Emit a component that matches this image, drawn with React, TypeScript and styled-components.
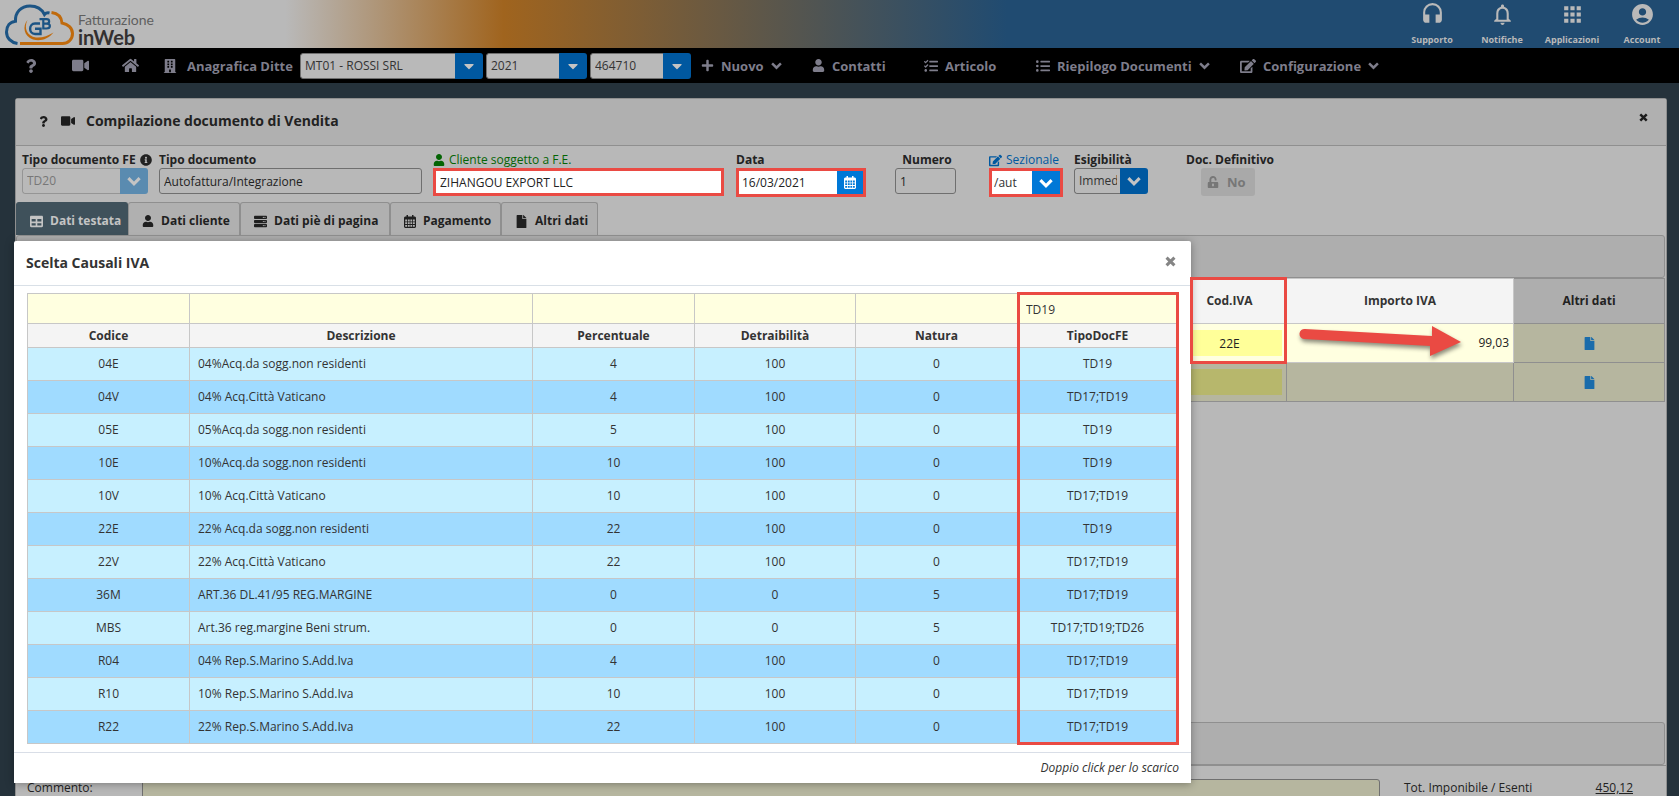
import React from "react";
import styled, { createGlobalStyle } from "styled-components";
import {
  FaBuilding,
  FaCaretDown,
  FaEdit,
  FaFile,
  FaHome,
  FaInfoCircle,
  FaListUl,
  FaPlus,
  FaQuestion,
  FaServer,
  FaTable,
  FaTasks,
  FaUnlockAlt,
  FaUser,
  FaVideo,
} from "react-icons/fa";
import { MdAccountCircle, MdApps, MdHeadset, MdNotificationsNone } from "react-icons/md";

const red = "#ea4a43";

const GlobalStyle = createGlobalStyle`
  * { box-sizing: border-box; }
  body {
    margin: 0;
    background: #25323b;
    color: #222;
    font-family: "Open Sans", "Noto Sans", sans-serif;
    font-size: 12px;
    line-height: 16px;
  }
  button, input, select, textarea { font: inherit; color: inherit; margin: 0; }
  svg { display: block; flex: none; }
`;

const Page = styled.div`
  position: relative;
  display: flex;
  flex-direction: column;
  height: 100vh;
  overflow: hidden;
`;

/* ---------- top banner ---------- */

const Banner = styled.header`
  display: flex;
  justify-content: space-between;
  flex: none;
  height: 48px;
  padding: 0 2px 0 5px;
  background: linear-gradient(90deg, #b9b9b9 17%, #a0641e 30%, #4a5356 50%, #204b71 60%);
`;

const Brand = styled.a`
  display: flex;
  align-items: flex-end;
  gap: 4px;
  padding-bottom: 2px;
  text-decoration: none;
`;

const BrandText = styled.span`
  display: flex;
  flex-direction: column;
  font-family: Lato, sans-serif;
  color: #5f5f5f;
  font-size: 14px;
  line-height: 16px;

  strong {
    color: #333030;
    font-size: 20px;
    line-height: 18px;
  }
`;

const QuickLinks = styled.nav`
  display: flex;
`;

const QuickLink = styled.button`
  display: flex;
  flex-direction: column;
  align-items: center;
  justify-content: space-between;
  width: 70px;
  padding: 2px 0 1px;
  border: 0;
  background: none;
  color: #b9b9b9;
  font-size: 9px;
  line-height: 14px;
  font-weight: 700;
`;

/* ---------- main navigation ---------- */

const NavBar = styled.nav`
  display: flex;
  align-items: center;
  flex: none;
  height: 35px;
  padding-left: 24px;
  background: #000;
  color: #7e7d8b;
  white-space: nowrap;
`;

const NavItem = styled.button<{ $width: number }>`
  display: flex;
  align-items: center;
  flex: none;
  gap: 7px;
  width: ${(p) => p.$width}px;
  padding: 0;
  border: 0;
  background: none;
  font-size: 13px;
  line-height: 20px;
  font-weight: 700;
  text-align: left;
`;

const NavLabel = styled.label`
  display: flex;
  align-items: center;
  flex: none;
  gap: 10px;
  width: 137px;
  font-size: 13px;
  line-height: 20px;
  font-weight: 700;
`;

/* ---------- form controls ---------- */

const SelectBox = styled.span<{ $width: number; $marked?: boolean; $faded?: boolean }>`
  display: flex;
  flex: none;
  width: ${(p) => p.$width}px;
  height: ${(p) => (p.$marked ? 29 : 26)}px;
  border: ${(p) => (p.$marked ? `3px solid ${red}` : "0")};
  border-radius: ${(p) => (p.$marked ? 0 : 3)}px;
  overflow: hidden;

  select {
    flex: 1;
    min-width: 0;
    appearance: none;
    padding: 0 3px 0 ${(p) => (p.$marked ? 2 : 4)}px;
    border: ${(p) => (p.$marked ? "0" : `1px solid ${p.$faded ? "#959595" : "#6f6f6f"}`)};
    border-right: 0;
    border-radius: ${(p) => (p.$marked ? 0 : "3px 0 0 3px")};
    background: ${(p) => (p.$marked ? "#fff" : "#b9b9b9")};
    color: ${(p) => (p.$faded ? "#777" : "#333")};
    opacity: 1;
  }
`;

const SelectArrow = styled.span<{ $color: string; $fill?: string }>`
  display: flex;
  align-items: center;
  justify-content: center;
  width: 28px;
  background: ${(p) => p.$color};
  color: ${(p) => p.$fill ?? "#c4c4c4"};
  pointer-events: none;
`;

const NavSelects = styled.span`
  display: flex;
  gap: 3px;
  width: 401px;
`;

const TextInput = styled.input<{ $width: number; $marked?: boolean }>`
  width: ${(p) => p.$width}px;
  height: ${(p) => (p.$marked ? 28 : 26)}px;
  padding: 0 4px;
  border: ${(p) => (p.$marked ? `3px solid ${red}` : "1px solid #6f6f6f")};
  border-radius: ${(p) => (p.$marked ? 0 : 3)}px;
  background: ${(p) => (p.$marked ? "#fff" : "#b8b8b8")};
`;

const DateBox = styled.span`
  display: flex;
  width: 130px;
  height: 29px;
  border: 3px solid ${red};

  input {
    flex: 1;
    min-width: 0;
    padding: 0 3px;
    border: 0;
    background: #fff;
  }

  button {
    display: flex;
    align-items: center;
    justify-content: center;
    width: 26px;
    padding: 0;
    border: 0;
    background: #0078d7;
    color: #fff;
  }
`;

/* ---------- document panel ---------- */

const Panel = styled.main`
  display: flex;
  flex-direction: column;
  flex: 1;
  min-height: 0;
  margin: 15px 12px 0 15px;
  border: 1px solid #8f8f8f;
  border-bottom: 0;
  border-radius: 3px 3px 0 0;
  background: #b8b8b8;
`;

const PanelHeader = styled.div`
  display: flex;
  align-items: center;
  flex: none;
  height: 47px;
  padding: 0 18px 2px 22px;
  border-bottom: 1px solid #8f8f8f;
  background: #b0b0b0;

  h1 {
    flex: 1;
    margin: 0 0 0 11px;
    font-size: 14px;
    line-height: 20px;
  }
`;

const IconButton = styled.button<{ $width?: number; $color?: string }>`
  display: flex;
  align-items: center;
  width: ${(p) => (p.$width ? `${p.$width}px` : "auto")};
  padding: 0;
  border: 0;
  background: none;
  color: ${(p) => p.$color ?? "#1c1c1c"};
`;

const Raised = styled.span`
  align-self: flex-start;
  padding-top: 14px;
`;

const FormRow = styled.form`
  display: grid;
  grid-template-columns: 137px 274px 303px 159px 94px 85px 112px 100px;
  flex: none;
  height: 56px;
  padding: 6px 0 0 6px;
`;

const Field = styled.div<{ $center?: boolean }>`
  display: flex;
  flex-direction: column;
  align-items: flex-start;

  label {
    display: flex;
    align-items: center;
    gap: 4px;
    width: ${(p) => (p.$center ? "64px" : "auto")};
    justify-content: ${(p) => (p.$center ? "center" : "flex-start")};
    white-space: nowrap;
    font-weight: 700;
    font-size: 12px;
    line-height: 16px;
  }
`;

const PlainLabel = styled.label<{ $color: string }>`
  && {
    color: ${(p) => p.$color};
    font-weight: 400;
  }
`;

const LockButton = styled.button`
  display: flex;
  align-items: center;
  gap: 8px;
  width: 54px;
  height: 28px;
  margin-left: 15px;
  padding: 0 6px;
  border: 0;
  border-radius: 3px;
  background: #a9a9a9;
  font-size: 13px;
  font-weight: 700;

  &:disabled { color: #777; }
`;

const Tabs = styled.div`
  display: flex;
  flex: none;
  height: 33px;
`;

const Tab = styled.button<{ $width: number; $active?: boolean }>`
  display: flex;
  align-items: center;
  gap: 7px;
  width: ${(p) => p.$width}px;
  padding: 4px 0 0 13px;
  border: 1px solid ${(p) => (p.$active ? "#3f515b" : "#8f8f8f")};
  border-bottom: 0;
  border-radius: 3px 3px 0 0;
  background: ${(p) => (p.$active ? "#3f515b" : "#b0b0b0")};
  color: ${(p) => (p.$active ? "#c4c4c4" : "#1f1f1f")};
  font-size: 12px;
  font-weight: 700;
  white-space: nowrap;
`;

const Strip = styled.div`
  flex: none;
  height: 43px;
  margin-right: 1px;
  border: 1px solid #8f8f8f;
  border-radius: 3px;
  background: #aeaeae;
`;

const GridArea = styled.div`
  flex: 1;
  min-height: 0;
  margin-right: 1px;
`;

const LinesTable = styled.table`
  width: 100%;
  table-layout: fixed;
  border-collapse: collapse;

  th, td { border: 1px solid #8f8f8f; padding: 0; }
  th { height: 45px; background: #aeaeae; font-size: 12px; font-weight: 700; }
  td { height: 39px; background: #b6b69f; }
  td svg { margin: 0 auto; }
`;

const LitHead = styled.th`
  && { position: relative; background: #f4f4f4; border-color: #c7c7c7; color: #333; }
`;

const LitCell = styled.td<{ $amount?: boolean }>`
  && {
    position: relative;
    padding-right: ${(p) => (p.$amount ? 4 : 0)}px;
    border-color: #c7c7c7;
    background: #ffffe0;
    text-align: right;
  }
`;

const CodeInput = styled.input<{ $lit?: boolean }>`
  display: block;
  width: 104px;
  height: 26px;
  margin: 0 auto;
  border: 0;
  background: ${(p) => (p.$lit ? "#ffff99" : "#b7b76c")};
  text-align: center;
`;

const CodeMark = styled.div`
  position: absolute;
  top: -2px;
  right: -1px;
  width: 97px;
  height: 87px;
  border: 3px solid ${red};
  z-index: 4;
`;

const Arrow = styled.svg`
  position: absolute;
  left: 11px;
  top: 0;
  overflow: visible;
`;

const CommentRow = styled.div`
  display: flex;
  flex: none;
  height: 31px;
  border-top: 1px solid #8f8f8f;
  padding: 13px 33px 0 11px;
  overflow: hidden;

  label { width: 115px; }

  textarea {
    flex: 1;
    height: 60px;
    border: 1px solid #707070;
    border-radius: 3px;
    background: #b6b69f;
    resize: none;
  }

  label, span, a { padding-top: 1px; }
`;

const TotalLabel = styled.span`
  width: 180px;
  margin-left: 24px;
`;

const TotalLink = styled.a`
  width: 49px;
  color: #222;
  text-align: right;
`;

/* ---------- dialog ---------- */

const Dialog = styled.section`
  position: absolute;
  top: 241px;
  left: 14px;
  right: 488px;
  border-radius: 2px 2px 0 0;
  background: #fff;
  box-shadow: 0 1px 8px rgba(0, 0, 0, 0.35);
  color: #333;
`;

const DialogHeader = styled.div`
  display: flex;
  align-items: center;
  justify-content: space-between;
  height: 45px;
  padding: 0 15px 0 12px;
  border-bottom: 1px solid #d9e0e7;

  h2 {
    margin: 0;
    font-size: 14px;
    line-height: 20px;
  }

  button { padding-bottom: 3px; }
`;

const DialogBody = styled.div`
  position: relative;
  margin: 7px 13px 8px;
`;

const ColumnMark = styled.div`
  position: absolute;
  top: -1px;
  right: -1px;
  bottom: -1px;
  width: 162px;
  border: 3px solid ${red};
`;

const CodesTable = styled.table`
  width: 100%;
  table-layout: fixed;
  border-collapse: collapse;

  th, td {
    border: 1px solid #c7c7c7;
    padding: 0;
    text-align: center;
  }
  th { height: 24px; background: #f4f4f4; font-weight: 700; font-size: 12px; }
  tbody td { height: 33px; }
  tbody td:nth-child(2) { padding-left: 8px; text-align: left; }
  tbody tr:nth-child(odd) { background: #c7f0ff; }
  tbody tr:nth-child(even) { background: #a0dbff; }
`;

const FilterCell = styled.td`
  && { height: 30px; background: #ffffe0; }

  input {
    display: block;
    width: 100%;
    height: 29px;
    padding: 2px 8px 0;
    border: 0;
    background: transparent;
  }
`;

const DialogFooter = styled.div`
  height: 31px;
  padding: 7px 12px 0;
  border-top: 1px solid #d9dee7;
  font-style: italic;
  text-align: right;
`;

const columns = ["Codice", "Descrizione", "Percentuale", "Detraibilità", "Natura", "TipoDocFE"];

const codes = [
  ["04E", "04%Acq.da sogg.non residenti", "4", "100", "0", "TD19"],
  ["04V", "04% Acq.Città Vaticano", "4", "100", "0", "TD17;TD19"],
  ["05E", "05%Acq.da sogg.non residenti", "5", "100", "0", "TD19"],
  ["10E", "10%Acq.da sogg.non residenti", "10", "100", "0", "TD19"],
  ["10V", "10% Acq.Città Vaticano", "10", "100", "0", "TD17;TD19"],
  ["22E", "22% Acq.da sogg.non residenti", "22", "100", "0", "TD19"],
  ["22V", "22% Acq.Città Vaticano", "22", "100", "0", "TD17;TD19"],
  ["36M", "ART.36 DL.41/95 REG.MARGINE", "0", "0", "5", "TD17;TD19"],
  ["MBS", "Art.36 reg.margine Beni strum.", "0", "0", "5", "TD17;TD19;TD26"],
  ["R04", "04% Rep.S.Marino S.Add.Iva", "4", "100", "0", "TD17;TD19"],
  ["R10", "10% Rep.S.Marino S.Add.Iva", "10", "100", "0", "TD17;TD19"],
  ["R22", "22% Rep.S.Marino S.Add.Iva", "22", "100", "0", "TD17;TD19"],
];

const navSelects = [
  { label: "Ditta", value: "MT01 - ROSSI SRL", width: 183 },
  { label: "Anno", value: "2021", width: 101 },
  { label: "Codice", value: "464710", width: 101 },
];

/* ---------- icons ---------- */

function ChevronIcon({ size }: { size: number }) {
  return (
    <svg width={size} height={size} viewBox="0 0 12 12" fill="none" aria-hidden="true">
      <path d="M1.200 3.600L6 8.400L10.800 3.600" stroke="currentColor" strokeWidth="2.700" />
    </svg>
  );
}

function CloseIcon({ size }: { size: number }) {
  return (
    <svg width={size} height={size} viewBox="0 0 12 12" fill="none" aria-hidden="true">
      <path d="M1.700 1.700L10.300 10.300M10.300 1.700L1.700 10.300" stroke="currentColor" strokeWidth="3.300" />
    </svg>
  );
}

function CalendarIcon() {
  return (
    <svg width="12" height="13" viewBox="0 0 12 13" aria-hidden="true">
      <path
        fill="currentColor"
        fillRule="evenodd"
        d="M2.500 0H4V1.500H8V0H9.500V1.500H11L12 2.500V12L11 13H1L0 12V2.500L1 1.500H2.500ZM1.200 4.600V6.400H3.100V4.600ZM3.900 4.600V6.400H5.700V4.600ZM6.400 4.600V6.400H8.200V4.600ZM9 4.600V6.400H10.800V4.600ZM1.200 7.200V9H3.100V7.200ZM3.900 7.200V9H5.700V7.200ZM6.400 7.200V9H8.200V7.200ZM9 7.200V9H10.800V7.200ZM1.200 9.900V11.700H3.100V9.900ZM3.900 9.900V11.700H5.700V9.900ZM6.400 9.900V11.700H8.200V9.900ZM9 9.900V11.700H10.800V9.900Z"
      />
    </svg>
  );
}

function CloudLogo() {
  return (
    <svg width="69" height="42" viewBox="0 0 69 42" fill="none" aria-hidden="true">
      <path d="M12.500 39.500C6 38.500 1.500 34 1.500 28C1.500 22 5 17.800 10.500 17.200C10 8.500 16 2 25 2C32 2 37 5.500 39.500 10.500C41 8.800 42.500 8.500 44.500 9" stroke="#1c5484" strokeWidth="3" />
      <path d="M46.500 8.500C52.500 9.300 56.500 13 57 19C63 20 67.500 24 67.500 29.500C67.500 35.500 63 39.500 57.500 39.500H15" stroke="#c06a0c" strokeWidth="3" />
      <path d="M22.500 16C18.500 24 22 32 31 33.500C37 34 43 32 48.500 28.500C43 35.500 35 37.500 28 35.500C19 32.500 17 22.500 22.500 16Z" fill="#c06a0c" />
      <path d="M35 19.500H30C23.500 19.500 23.500 30 30 30H35.500V24.800H30" stroke="#1c5484" strokeWidth="2.400" />
      <path d="M34.500 15.200H41.500C45 15.200 45 19.600 41.500 19.600H38M41.500 19.600C46 19.600 46 24.500 41.500 24.500H38.300V15.200" stroke="#1c5484" strokeWidth="2.200" />
    </svg>
  );
}

/* ---------- sections ---------- */

function NavMenu() {
  return (
    <NavBar>
      <NavItem $width={48} type="button" aria-label="Aiuto"><FaQuestion size={14} /></NavItem>
      <NavItem $width={50} type="button" aria-label="Video"><FaVideo size={17} /></NavItem>
      <NavItem $width={41} type="button" aria-label="Home"><FaHome size={17} /></NavItem>
      <NavLabel htmlFor="nav-0"><FaBuilding size={14} />Anagrafica Ditte</NavLabel>
      <NavSelects>
        {navSelects.map((s, i) => (
          <SelectBox key={s.label} $width={s.width}>
            <select id={`nav-${i}`} aria-label={s.label}><option>{s.value}</option></select>
            <SelectArrow $color="#0058a0"><FaCaretDown size={16} /></SelectArrow>
          </SelectBox>
        ))}
      </NavSelects>
      <NavItem $width={111} type="button"><FaPlus size={13} />Nuovo<ChevronIcon size={11} /></NavItem>
      <NavItem $width={112} type="button"><FaUser size={13} />Contatti</NavItem>
      <NavItem $width={112} type="button"><FaTasks size={14} />Articolo</NavItem>
      <NavItem $width={204} type="button"><FaListUl size={14} />Riepilogo Documenti<ChevronIcon size={11} /></NavItem>
      <NavItem $width={150} type="button"><FaEdit size={16} />Configurazione<ChevronIcon size={11} /></NavItem>
    </NavBar>
  );
}

function DocumentForm() {
  return (
    <FormRow>
      <Field>
        <label htmlFor="tipo-fe">Tipo documento FE<FaInfoCircle size={12} /></label>
        <SelectBox $width={126} $faded>
          <select id="tipo-fe" disabled><option>TD20</option></select>
          <SelectArrow $color="#5a8bb0"><ChevronIcon size={14} /></SelectArrow>
        </SelectBox>
      </Field>
      <Field>
        <label htmlFor="tipo">Tipo documento</label>
        <TextInput id="tipo" $width={263} defaultValue="Autofattura/Integrazione" />
      </Field>
      <Field>
        <PlainLabel htmlFor="cliente" $color="#046404"><FaUser size={12} />Cliente soggetto a F.E.</PlainLabel>
        <TextInput id="cliente" $width={291} $marked defaultValue="ZIHANGOU EXPORT LLC" />
      </Field>
      <Field>
        <label htmlFor="data">Data</label>
        <DateBox>
          <input id="data" defaultValue="16/03/2021" />
          <button type="button" aria-label="Calendario"><CalendarIcon /></button>
        </DateBox>
      </Field>
      <Field $center>
        <label htmlFor="numero">Numero</label>
        <TextInput id="numero" $width={61} defaultValue="1" />
      </Field>
      <Field>
        <PlainLabel htmlFor="sezionale" $color="#0058a0"><FaEdit size={13} />Sezionale</PlainLabel>
        <SelectBox $width={74} $marked>
          <select id="sezionale"><option>/aut</option></select>
          <SelectArrow $color="#0078d7" $fill="#fff"><ChevronIcon size={14} /></SelectArrow>
        </SelectBox>
      </Field>
      <Field>
        <label htmlFor="esigibilita">Esigibilità</label>
        <SelectBox $width={74}>
          <select id="esigibilita"><option>Immediata</option></select>
          <SelectArrow $color="#0058a0"><ChevronIcon size={14} /></SelectArrow>
        </SelectBox>
      </Field>
      <Field>
        <label htmlFor="definitivo">Doc. Definitivo</label>
        <LockButton id="definitivo" type="button" disabled><FaUnlockAlt size={12} />No</LockButton>
      </Field>
    </FormRow>
  );
}

function LinesGrid() {
  return (
    <LinesTable>
      <colgroup>
        <col />
        <col style={{ width: 114 }} />
        <col style={{ width: 227 }} />
        <col style={{ width: 151 }} />
      </colgroup>
      <thead>
        <tr>
          <th />
          <LitHead>Cod.IVA<CodeMark /></LitHead>
          <LitHead>Importo IVA</LitHead>
          <th>Altri dati</th>
        </tr>
      </thead>
      <tbody>
        <tr>
          <td />
          <LitCell><CodeInput $lit aria-label="Codice IVA riga 1" defaultValue="22E" /></LitCell>
          <LitCell $amount>
            99,03
            <Arrow width="164" height="39" viewBox="0 0 164 39" aria-hidden="true">
              <path
                d="M7 5L134 12V2L163 18L132 32V22L6 15A5 5 0 0 1 7 5Z"
                fill={red}
                style={{ filter: "drop-shadow(1px 3px 2px rgba(0,0,0,.45))" }}
              />
            </Arrow>
          </LitCell>
          <td><FaFile size={13} color="#1a6cab" /></td>
        </tr>
        <tr>
          <td />
          <td><CodeInput aria-label="Codice IVA riga 2" /></td>
          <td />
          <td><FaFile size={13} color="#1a6cab" /></td>
        </tr>
      </tbody>
    </LinesTable>
  );
}

function CodesDialog() {
  return (
    <Dialog role="dialog" aria-labelledby="codes-title">
      <DialogHeader>
        <h2 id="codes-title">Scelta Causali IVA</h2>
        <IconButton type="button" aria-label="Chiudi" $color="#858585"><CloseIcon size={11} /></IconButton>
      </DialogHeader>
      <DialogBody>
        <CodesTable>
          <colgroup>
            <col style={{ width: 162 }} />
            <col />
            <col style={{ width: 162 }} />
            <col style={{ width: 161 }} />
            <col style={{ width: 162 }} />
            <col style={{ width: 160 }} />
          </colgroup>
          <thead>
            <tr>
              {columns.map((c) => (
                <FilterCell key={c}>
                  <input aria-label={`Filtra ${c}`} defaultValue={c === "TipoDocFE" ? "TD19" : ""} />
                </FilterCell>
              ))}
            </tr>
            <tr>{columns.map((c) => <th key={c}>{c}</th>)}</tr>
          </thead>
          <tbody>
            {codes.map((row) => (
              <tr key={row[0]}>{row.map((cell, i) => <td key={i}>{cell}</td>)}</tr>
            ))}
          </tbody>
        </CodesTable>
        <ColumnMark />
      </DialogBody>
      <DialogFooter>Doppio click per lo scarico</DialogFooter>
    </Dialog>
  );
}

export default function App() {
  return (
    <Page>
      <GlobalStyle />
      <Banner>
        <Brand href="#">
          <CloudLogo />
          <BrandText>Fatturazione<strong>inWeb</strong></BrandText>
        </Brand>
        <QuickLinks>
          <QuickLink type="button"><MdHeadset size={25} />Supporto</QuickLink>
          <QuickLink type="button"><MdNotificationsNone size={25} />Notifiche</QuickLink>
          <QuickLink type="button"><MdApps size={25} />Applicazioni</QuickLink>
          <QuickLink type="button"><MdAccountCircle size={25} />Account</QuickLink>
        </QuickLinks>
      </Banner>
      <NavMenu />
      <Panel>
        <PanelHeader>
          <IconButton type="button" aria-label="Aiuto" $width={23}><FaQuestion size={11} /></IconButton>
          <IconButton type="button" aria-label="Video"><FaVideo size={14} /></IconButton>
          <h1>Compilazione documento di Vendita</h1>
          <Raised><IconButton type="button" aria-label="Chiudi"><CloseIcon size={9} /></IconButton></Raised>
        </PanelHeader>
        <DocumentForm />
        <Tabs role="tablist">
          <Tab role="tab" $width={112} $active><FaTable size={13} />Dati testata</Tab>
          <Tab role="tab" $width={112}><FaUser size={12} />Dati cliente</Tab>
          <Tab role="tab" $width={150}><FaServer size={13} />Dati piè di pagina</Tab>
          <Tab role="tab" $width={111}><CalendarIcon />Pagamento</Tab>
          <Tab role="tab" $width={97}><FaFile size={13} />Altri dati</Tab>
        </Tabs>
        <Strip />
        <GridArea><LinesGrid /></GridArea>
        <Strip />
        <CommentRow>
          <label htmlFor="commento">Commento:</label>
          <textarea id="commento" />
          <TotalLabel>Tot. Imponibile / Esenti</TotalLabel>
          <TotalLink href="#">450,12</TotalLink>
        </CommentRow>
      </Panel>
      <CodesDialog />
    </Page>
  );
}
